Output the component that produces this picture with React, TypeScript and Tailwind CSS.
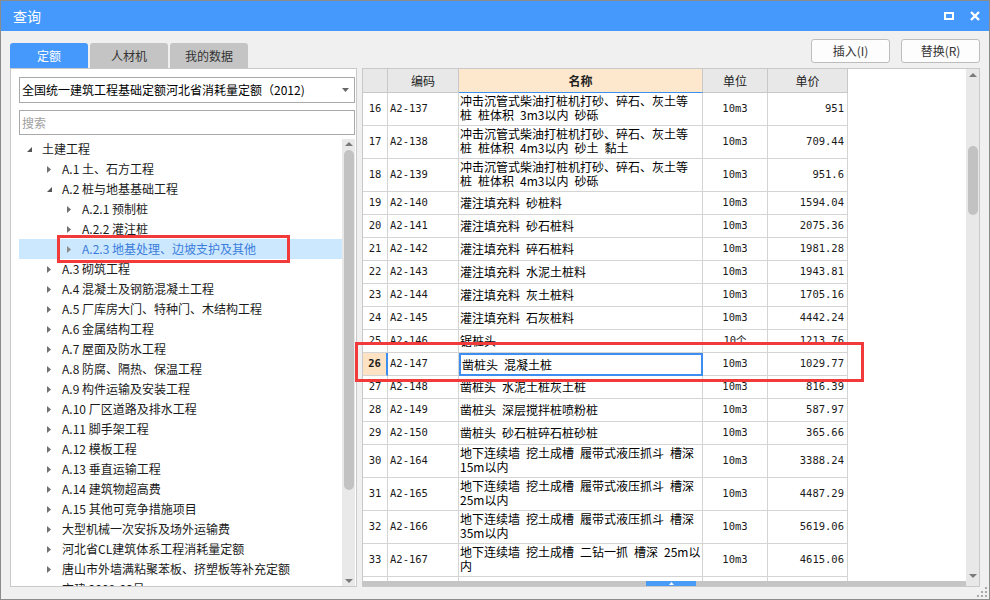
import React from 'react';

type TreeNode = { label: string; level: 0 | 1 | 2; expanded?: boolean; selected?: boolean };

const tree: TreeNode[] = [
  { label: '土建工程', level: 0, expanded: true },
  { label: 'A.1 土、石方工程', level: 1 },
  { label: 'A.2 桩与地基基础工程', level: 1, expanded: true },
  { label: 'A.2.1 预制桩', level: 2 },
  { label: 'A.2.2 灌注桩', level: 2 },
  { label: 'A.2.3 地基处理、边坡支护及其他', level: 2, selected: true },
  { label: 'A.3 砌筑工程', level: 1 },
  { label: 'A.4 混凝土及钢筋混凝土工程', level: 1 },
  { label: 'A.5 厂库房大门、特种门、木结构工程', level: 1 },
  { label: 'A.6 金属结构工程', level: 1 },
  { label: 'A.7 屋面及防水工程', level: 1 },
  { label: 'A.8 防腐、隔热、保温工程', level: 1 },
  { label: 'A.9 构件运输及安装工程', level: 1 },
  { label: 'A.10 厂区道路及排水工程', level: 1 },
  { label: 'A.11 脚手架工程', level: 1 },
  { label: 'A.12 模板工程', level: 1 },
  { label: 'A.13 垂直运输工程', level: 1 },
  { label: 'A.14 建筑物超高费', level: 1 },
  { label: 'A.15 其他可竞争措施项目', level: 1 },
  { label: '大型机械一次安拆及场外运输费', level: 1 },
  { label: '河北省CL建筑体系工程消耗量定额', level: 1 },
  { label: '唐山市外墙满粘聚苯板、挤塑板等补充定额', level: 1 },
  { label: '京建 2009-03号', level: 1 },
];

const indent = { 0: 'pl-[8px]', 1: 'pl-[28px]', 2: 'pl-[48px]' };

type Row = { n: number | ''; code: string; name: string[]; unit: string; price: string };

const pile = '冲击沉管式柴油打桩机打砂、碎石、灰土等';
const wall = '地下连续墙\u2002挖土成槽\u2002履带式液压抓斗\u2002槽深';

const rows: Row[] = [
  { n: 16, code: 'A2-137', name: [pile, '桩\u2002桩体积\u20023m3以内\u2002砂砾'], unit: '10m3', price: '951' },
  { n: 17, code: 'A2-138', name: [pile, '桩\u2002桩体积\u20024m3以内\u2002砂土\u2002黏土'], unit: '10m3', price: '709.44' },
  { n: 18, code: 'A2-139', name: [pile, '桩\u2002桩体积\u20024m3以内\u2002砂砾'], unit: '10m3', price: '951.6' },
  { n: 19, code: 'A2-140', name: ['灌注填充料\u2002砂桩料'], unit: '10m3', price: '1594.04' },
  { n: 20, code: 'A2-141', name: ['灌注填充料\u2002砂石桩料'], unit: '10m3', price: '2075.36' },
  { n: 21, code: 'A2-142', name: ['灌注填充料\u2002碎石桩料'], unit: '10m3', price: '1981.28' },
  { n: 22, code: 'A2-143', name: ['灌注填充料\u2002水泥土桩料'], unit: '10m3', price: '1943.81' },
  { n: 23, code: 'A2-144', name: ['灌注填充料\u2002灰土桩料'], unit: '10m3', price: '1705.16' },
  { n: 24, code: 'A2-145', name: ['灌注填充料\u2002石灰桩料'], unit: '10m3', price: '4442.24' },
  { n: 25, code: 'A2-146', name: ['锯桩头'], unit: '10个', price: '1213.76' },
  { n: 26, code: 'A2-147', name: ['凿桩头\u2002混凝土桩'], unit: '10m3', price: '1029.77' },
  { n: 27, code: 'A2-148', name: ['凿桩头\u2002水泥土桩灰土桩'], unit: '10m3', price: '816.39' },
  { n: 28, code: 'A2-149', name: ['凿桩头\u2002深层搅拌桩喷粉桩'], unit: '10m3', price: '587.97' },
  { n: 29, code: 'A2-150', name: ['凿桩头\u2002砂石桩碎石桩砂桩'], unit: '10m3', price: '365.66' },
  { n: 30, code: 'A2-164', name: [wall, '15m以内'], unit: '10m3', price: '3388.24' },
  { n: 31, code: 'A2-165', name: [wall, '25m以内'], unit: '10m3', price: '4487.29' },
  { n: 32, code: 'A2-166', name: [wall, '35m以内'], unit: '10m3', price: '5619.06' },
  { n: 33, code: 'A2-167', name: ['地下连续墙\u2002挖土成槽\u2002二钻一抓\u2002槽深\u200225m以', '内'], unit: '10m3', price: '4615.06' },
];

const mono = "[font-family:'DejaVu_Sans_Mono','Noto_Sans_CJK_SC',monospace]";

function Up() {
  return (
    <svg width="8" height="4" viewBox="0 0 8 4">
      <polygon points="0,4 4,0 8,4" fill="#7a7a7a" />
    </svg>
  );
}

function Down() {
  return (
    <svg width="8" height="4" viewBox="0 0 8 4">
      <polygon points="0,0 8,0 4,4" fill="#7a7a7a" />
    </svg>
  );
}

function TreeRow({ node }: { node: TreeNode }) {
  return (
    <div
      className={`flex items-center h-[20px] leading-[20px] whitespace-nowrap ${indent[node.level]} ${
        node.selected ? 'bg-[#cce8ff] text-[#3b7ddb]' : 'text-[#1a1a1a]'
      }`}
    >
      <span className="w-[15px] flex items-center">
        {node.expanded ? (
          <svg width="5" height="5" viewBox="0 0 5 5">
            <polygon points="5,0 5,5 0,5" fill="#555" />
          </svg>
        ) : (
          <svg width="4" height="7" viewBox="0 0 4 7">
            <polygon points="0,0 4,3.5 0,7" fill={node.selected ? '#8a8a8a' : '#707070'} />
          </svg>
        )}
      </span>
      <span>{node.label}</span>
    </div>
  );
}

function TableRow({ r }: { r: Row }) {
  const two = r.name.length > 1;
  const sel = r.n === 26;
  return (
    <div className={`flex ${two ? 'h-[33px]' : 'h-[23px]'}`}>
      <div
        className={`w-[25px] shrink-0 border-b border-[#d4d4d4] flex items-center justify-center text-[10.5px] ${mono} ${
          sel ? 'bg-[#fde3c4] font-bold border-r-[2px] border-r-[#3b8ff0]' : 'border-r'
        }`}
      >
        {r.n}
      </div>
      <div className={`w-[71px] shrink-0 border-r border-b border-[#d4d4d4] flex items-center pl-[2px] text-[10.5px] ${mono}`}>
        {r.code}
      </div>
      <div
        className={`w-[244px] shrink-0 flex flex-col overflow-hidden whitespace-nowrap text-[12px] text-black pl-[1px] ${
          two ? 'justify-start pt-[1px] leading-[14px]' : 'justify-center leading-[14px]'
        } ${sel ? 'border-[2px] border-[#3d8ef0]' : 'border-r border-b border-[#d4d4d4]'}`}
      >
        {r.name.map((l, i) => (
          <span key={i} className="h-[14px]">
            {l}
          </span>
        ))}
      </div>
      <div className={`w-[65px] shrink-0 border-r border-b border-[#d4d4d4] flex items-center justify-center text-[10.5px] ${mono}`}>
        {r.unit}
      </div>
      <div className={`w-[80px] shrink-0 border-r border-b border-[#d4d4d4] flex items-center justify-end pr-[3px] text-[10.5px] ${mono}`}>
        {r.price}
      </div>
    </div>
  );
}

export default function App() {
  return (
    <div className="relative w-[990px] h-[600px] bg-[#f0f0f0] border border-[#8c8c8c] flex flex-col [font-family:'Noto_Sans_CJK_SC','Noto_Sans',sans-serif] text-[12px] text-[#1a1a1a]">
      {/* title bar */}
      <div className="h-[30px] shrink-0 bg-[#4599fd] flex items-center pl-[12px] pr-[9px] text-white text-[14px]">
        <span>查询</span>
        <div className="ml-auto flex items-center gap-[16px]">
          <svg width="10" height="8" viewBox="0 0 10 8">
            <rect x="1" y="1" width="8" height="6" fill="none" stroke="#fff" strokeWidth="2" />
          </svg>
          <svg width="10" height="10" viewBox="0 0 10 10">
            <path d="M1 1 L9 9 M9 1 L1 9" stroke="#fff" strokeWidth="2.4" />
          </svg>
        </div>
      </div>

      <div className="flex-1 flex flex-col px-[9px] pt-[8px]">
        {/* tabs + buttons */}
        <div className="flex h-[29px] shrink-0">
          <div className="flex items-end gap-[2px]">
            <div className="w-[78px] h-[25px] rounded-t-[3px] bg-[#4599fd] text-white flex items-center justify-center">定额</div>
            <div className="w-[78px] h-[25px] rounded-t-[3px] bg-[#c4c4c4] text-[#333] flex items-center justify-center">人材机</div>
            <div className="w-[78px] h-[25px] rounded-t-[3px] bg-[#c4c4c4] text-[#333] flex items-center justify-center">我的数据</div>
          </div>
          <div className="ml-auto flex items-start gap-[11px]">
            <button className="w-[79px] h-[24px] bg-[#fdfdfd] border border-[#bdbdbd] rounded-[3px] text-[#333] text-[12px]">插入(I)</button>
            <button className="w-[79px] h-[24px] bg-[#fdfdfd] border border-[#bdbdbd] rounded-[3px] text-[#333] text-[12px]">替换(R)</button>
          </div>
        </div>

        {/* panels */}
        <div className="flex gap-[5px] h-[519px]">
          {/* left */}
          <div className="relative w-[347px] shrink-0 bg-white border border-[#c9c9c9] flex flex-col pl-[8px] pr-[1px] pt-[8px]">
            <div className="h-[26px] w-[336px] border border-[#a9a9a9] flex items-center pl-[2px] pr-[5px] text-black text-[12px]">
              <span className="whitespace-nowrap">全国统一建筑工程基础定额河北省消耗量定额（2012)</span>
              <svg className="ml-auto" width="7" height="4" viewBox="0 0 7 4">
                <polygon points="0,0 7,0 3.5,4" fill="#666" />
              </svg>
            </div>
            <div className="mt-[7px] h-[25px] w-[336px] border border-[#a9a9a9] flex items-center pl-[2px] text-[#a0a0a0] text-[12px]">
              搜索
            </div>
            <div className="mt-[4px] flex-1 flex overflow-hidden">
              <div className="flex-1 overflow-hidden">
                {tree.map((n, i) => (
                  <TreeRow key={i} node={n} />
                ))}
              </div>
              <div className="w-[13px] shrink-0 bg-[#e9e9e9] flex flex-col items-center">
                <div className="mt-[3px]">
                  <Up />
                </div>
                <div className="mt-[4px] w-[10px] h-[340px] rounded-full bg-[#c2c2c2]" />
                <div className="mt-auto mb-[3px]">
                  <Down />
                </div>
              </div>
            </div>
            <div className="absolute left-[46px] top-[166px] w-[233px] h-[28px] border-[3px] border-[#f23a3a]" />
          </div>

          {/* right */}
          <div className="relative flex-1 bg-white border border-[#c9c9c9] flex">
            <div className="flex-1 flex flex-col overflow-hidden">
              <div className="flex h-[24px] shrink-0 text-[12px] text-[#222]">
                <div className="w-[25px] border-r border-b border-[#c8c8c8] bg-[#e8e8e8]" />
                <div className="w-[71px] border-r border-b border-[#c8c8c8] bg-[#e8e8e8] flex items-center justify-center">编码</div>
                <div className="w-[244px] border-r border-[#c8c8c8] border-b border-b-[#3b8ff0] bg-[#fee8cd] flex items-center justify-center font-bold">名称</div>
                <div className="w-[65px] border-r border-b border-[#c8c8c8] bg-[#e8e8e8] flex items-center justify-center">单位</div>
                <div className="w-[80px] border-r border-b border-[#c8c8c8] bg-[#e8e8e8] flex items-center justify-center">单价</div>
              </div>
              <div className="flex-1 overflow-hidden">
                {rows.map((r) => (
                  <TableRow key={r.n} r={r} />
                ))}
                <TableRow r={{ n: '', code: '', name: ['', ''], unit: '', price: '' }} />
              </div>
              <div className="h-[5px] shrink-0 bg-[#c5c5c5] flex">
                <div className="ml-[283px] w-[50px] h-full bg-[#4a9bf5] flex items-center justify-center">
                  <svg width="5" height="3" viewBox="0 0 5 3">
                    <polygon points="0,3 2.5,0 5,3" fill="#fff" />
                  </svg>
                </div>
              </div>
            </div>
            <div className="w-[13px] shrink-0 bg-[#e8e8e8] flex flex-col items-center">
              <div className="mt-[4px]">
                <Up />
              </div>
              <div className="mt-[69px] w-[10px] h-[69px] rounded-full bg-[#c2c2c2]" />
              <div className="mt-auto mb-[8px]">
                <Down />
              </div>
            </div>
            <div className="absolute left-[-8px] top-[273px] w-[509px] h-[40px] border-[3px] border-[#f23a3a]" />
          </div>
        </div>
      </div>

      {/* resize grip */}
      <svg className="absolute right-[2px] bottom-[2px]" width="10" height="10" viewBox="0 0 10 10">
        <rect x="8" y="0" width="2" height="2" fill="#a8a8a8" />
        <rect x="4" y="4" width="2" height="2" fill="#a8a8a8" />
        <rect x="8" y="4" width="2" height="2" fill="#a8a8a8" />
        <rect x="0" y="8" width="2" height="2" fill="#a8a8a8" />
        <rect x="4" y="8" width="2" height="2" fill="#a8a8a8" />
        <rect x="8" y="8" width="2" height="2" fill="#a8a8a8" />
      </svg>
    </div>
  );
}
